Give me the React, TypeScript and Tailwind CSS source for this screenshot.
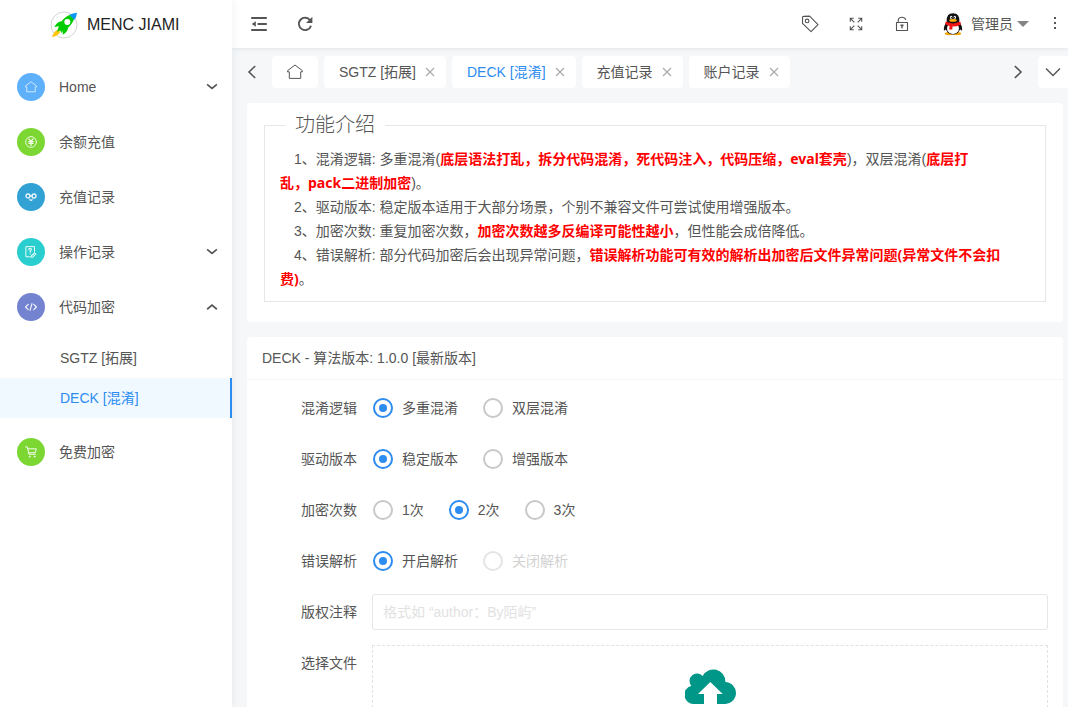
import React, { useState } from "react";

type IconProps = { className?: string };

const stroke = {
  fill: "none",
  stroke: "currentColor",
  strokeLinecap: "round" as const,
  strokeLinejoin: "round" as const,
};

function LogoIcon() {
  return (
    <svg viewBox="0 0 84 84" className="size-7" aria-hidden="true">
      <circle cx="42" cy="42" r="39" fill="#fff" stroke="#d4d4d4" strokeWidth="3" />
      <path d="M30 54 L22 56 Q10 62 6 79 Q20 76 29 67 Z" fill="#fdc50b" />
      <path
        d="M60 11 Q44 17 35 31 Q22 32 13 48 L27 46 Q22 56 22 63 L30 58 L35 66 Q39 62 39 57 L38 71 Q54 62 54 50 Q67 40 73 22 Z"
        fill="#0c0"
      />
      <path d="M58 11 Q68 6 81 5 Q80 17 73 27 Z" fill="#0a96f5" />
      <circle cx="52" cy="33" r="9" fill="#fff" />
    </svg>
  );
}

function HomeIcon({ className }: IconProps) {
  return (
    <svg viewBox="0 0 16 16" className={className} {...stroke} aria-hidden="true">
      <path d="M0.7 6.6 8 1l7.3 5.6v1.2h-1.6v6.6H2.3V7.8H0.7z" />
    </svg>
  );
}

function YenIcon() {
  return (
    <svg viewBox="0 0 12 12" className="size-3" {...stroke} aria-hidden="true">
      <circle cx="6" cy="6" r="5.4" strokeWidth="0.9" />
      <path d="M3.9 2.9 6 5.4l2.1-2.5M6 5.4v4M3.8 5.6h4.4M3.8 7.3h4.4" strokeWidth="1.2" />
    </svg>
  );
}

function GlassesIcon() {
  return (
    <svg viewBox="0 0 12 12" className="size-3" {...stroke} aria-hidden="true">
      <circle cx="3" cy="5" r="2" strokeWidth="1.3" />
      <circle cx="9" cy="5" r="2" strokeWidth="1.3" />
      <path d="M5 4.6q1 .9 2 0" strokeWidth="1.1" />
      <path d="M4.9 8.8q1.1 1 2.2 0" strokeWidth="1.3" />
    </svg>
  );
}

function SurveyIcon() {
  return (
    <svg viewBox="0 0 12 12" className="size-3" {...stroke} aria-hidden="true">
      <path d="M5 10.8H.9V.6h8.6v4.8" />
      <path d="M3.8 3.7q0-1.3 1.3-1.3t1.3 1.2q0 .8-1.2 1.5v1.1M5.2 7.9v.1" strokeWidth="1.1" />
      <path d="M6.3 9.7 9.5 6.6l1.6 1.5-3.2 3.1H6.3zM7.6 9.7l2.2-2.2" />
    </svg>
  );
}

function CodeIcon() {
  return (
    <svg viewBox="0 0 12 12" className="size-3" {...stroke} strokeWidth="1.2" aria-hidden="true">
      <path d="M3.2 3.4.6 6l2.6 2.6M8.8 3.4 11.4 6 8.8 8.6M7 2.7 5 9.3" />
    </svg>
  );
}

function CartIcon() {
  return (
    <svg viewBox="0 0 12 12" className="size-3" {...stroke} aria-hidden="true">
      <path d="M.6.9h1.7L4 8.3h6.6M2.9 2.8h8.4l-.9 3.7-6.8.4" />
      <path d="M4.7 10.6h.1M9.6 10.6h.1" strokeWidth="1.9" />
    </svg>
  );
}

function Chevron({ className, d, width = 1.6 }: IconProps & { d: string; width?: number }) {
  return (
    <svg viewBox="0 0 16 16" className={className} fill="none" stroke="currentColor" strokeWidth={width} aria-hidden="true">
      <path d={d} />
    </svg>
  );
}

function FoldIcon() {
  return (
    <svg viewBox="0 0 16 16" className="size-4" aria-hidden="true" fill="none" stroke="currentColor" strokeWidth="2">
      <path d="M.2 2h15.6M6.6 8h9.2M.2 14h15.6" />
      <path d="M4.8 5.2v5.6L.8 8z" fill="currentColor" stroke="none" />
    </svg>
  );
}

function RefreshIcon() {
  return (
    <svg viewBox="0 0 16 16" className="size-4" aria-hidden="true" fill="none" stroke="currentColor" strokeWidth="1.9">
      <path d="M13.1 4.2A6.2 6.2 0 1 0 14 9.8" />
      <path d="M15.4 .8v6.2H9z" fill="currentColor" stroke="none" />
    </svg>
  );
}

function TagIcon() {
  return (
    <svg viewBox="0 0 18 18" className="size-[18px]" {...stroke} strokeWidth="1.1" aria-hidden="true">
      <path d="M1.6 2.3Q1.6 1.4 2.5 1.4L8.6 1.1 17 9.7 10 16.6 1.5 8.4z" />
      <circle cx="6.1" cy="5.9" r="1.8" />
    </svg>
  );
}

function ExpandIcon() {
  return (
    <svg viewBox="0 0 14 14" className="size-3.5" fill="none" stroke="currentColor" strokeWidth="1.1" aria-hidden="true">
      <path d="M1.3 4.8V1.3H4.8M1.3 1.3l4 4M9.2 1.3h3.5V4.8M12.7 1.3l-4 4M1.3 9.2v3.5H4.8M1.3 12.7l4-4M12.7 9.2v3.5H9.2M12.7 12.7l-4-4" />
    </svg>
  );
}

function LockIcon() {
  return (
    <svg viewBox="0 0 14 16" className="h-4 w-3.5" {...stroke} strokeWidth="1.1" aria-hidden="true">
      <path d="M1.5 6.5h11v8h-11zM3.2 6.5V4.4Q3.4 1.2 7 1.2q2.8 0 3.7 2.4" />
      <path d="M6 9.3h2M7 9.3v2.4" strokeWidth="1.5" />
    </svg>
  );
}

function PenguinIcon() {
  return (
    <svg viewBox="0 0 20 24" className="h-6 w-5" aria-hidden="true">
      <ellipse cx="6" cy="21.6" rx="4.2" ry="1.6" fill="#f5a800" />
      <ellipse cx="14" cy="21.6" rx="4.2" ry="1.6" fill="#f5a800" />
      <path d="M4 10Q.2 14 .9 18.4q1 .6 2.5-1.6l13.2 0q1.5 2.2 2.5 1.6Q19.8 14 16 10z" fill="#111" />
      <ellipse cx="10" cy="15.6" rx="7.4" ry="6.8" fill="#111" />
      <ellipse cx="10" cy="16.4" rx="6" ry="5.6" fill="#fff" />
      <path d="M3.6 9.6Q3.2 1.2 10 1.2t6.4 8.4q-3 2.8-6.4 2.8T3.6 9.6z" fill="#111" />
      <ellipse cx="8.2" cy="5.4" rx="1.2" ry="1.7" fill="#fff" />
      <ellipse cx="11.8" cy="5.4" rx="1.2" ry="1.7" fill="#fff" />
      <circle cx="8.6" cy="5.7" r=".7" fill="#111" />
      <circle cx="11.4" cy="5.7" r=".7" fill="#111" />
      <ellipse cx="10" cy="8.4" rx="3.8" ry="1.3" fill="#ffb000" />
      <path d="M2.8 9.6q7.2 3.6 14.4 0l.9 2.8q-4 2.2-8.6 2.2l-.2 2.8H6.2l.4-3.3q-2.6-.6-4.5-2z" fill="#f01414" />
    </svg>
  );
}

function CloudUploadIcon() {
  return (
    <svg viewBox="0 0 153 105" className="h-[35px] w-[51px] text-[#009688]" fill="currentColor" aria-hidden="true">
      <path d="M28 105A28 28 0 0 1 19 50A21 21 0 0 1 53 21A36 36 0 0 1 121 39A33 33 0 0 1 119 105H96V75H113L76 39L39 75H57V105Z" />
    </svg>
  );
}

const DOWN = "M1.5 4.5 8 10 14.5 4.5";
const UP = "M1.5 11 8 5.5 14.5 11";
const LEFT = "M11.2 2 5 8l6.2 6";
const RIGHT = "M4.8 2 11 8l-6.2 6";

function MenuItem({ label, color, icon, arrow }: { label: string; color: string; icon: React.ReactNode; arrow?: string }) {
  return (
    <a href="#" className="flex h-10 items-center pr-[14px] pl-[17px] hover:text-[#2d8cf0]">
      <span className={`mr-3.5 flex size-7 items-center justify-center rounded-full text-white/90 ${color}`}>{icon}</span>
      <span className="flex-1">{label}</span>
      {arrow && <Chevron className="size-3" d={arrow} width={2.2} />}
    </a>
  );
}

function Sidebar() {
  return (
    <aside className="z-10 flex w-[232px] shrink-0 flex-col bg-white shadow-[2px_0_8px_rgba(29,35,41,0.05)]">
      <div className="flex h-[49px] items-center gap-[9px] pl-[50px] text-base text-[#222]">
        <LogoIcon />
        <span>MENC JIAMI</span>
      </div>
      <nav className="mt-[18px] flex flex-col gap-[15px]">
        <MenuItem label="Home" color="bg-[#5fb0fb]" icon={<HomeIcon className="size-3" />} arrow={DOWN} />
        <MenuItem label="余额充值" color="bg-[#7cd733]" icon={<YenIcon />} />
        <MenuItem label="充值记录" color="bg-[#32a2d4]" icon={<GlassesIcon />} />
        <MenuItem label="操作记录" color="bg-[#2bcecf]" icon={<SurveyIcon />} arrow={DOWN} />
        <div>
          <MenuItem label="代码加密" color="bg-[#7383cf]" icon={<CodeIcon />} arrow={UP} />
          <div className="mt-[11px] -mb-px">
            <a href="#" className="flex h-10 items-center pl-[60px]">SGTZ [拓展]</a>
            <a href="#" aria-current="page" className="flex h-10 items-center border-r-2 border-[#2d8cf0] bg-[#f0f9ff] pl-[60px] text-[#2d8cf0]">
              DECK [混淆]
            </a>
          </div>
        </div>
        <MenuItem label="免费加密" color="bg-[#7cd733]" icon={<CartIcon />} />
      </nav>
    </aside>
  );
}

function Header() {
  return (
    <header className="z-[5] flex h-12 shrink-0 items-center bg-white pr-[9px] pl-[19px] shadow-[0_1px_4px_rgba(0,21,41,0.08)]">
      <button aria-label="折叠菜单"><FoldIcon /></button>
      <button aria-label="刷新" className="ml-[30px]"><RefreshIcon /></button>
      <div className="ml-auto flex items-center">
        <button aria-label="标签"><TagIcon /></button>
        <button aria-label="全屏" className="ml-[30px]"><ExpandIcon /></button>
        <button aria-label="锁屏" className="ml-8"><LockIcon /></button>
        <button className="ml-[34px] flex items-center">
          <PenguinIcon />
          <span className="ml-2">管理员</span>
          <svg viewBox="0 0 12 6" className="ml-1 h-1.5 w-3 text-[#848484]" aria-hidden="true">
            <path d="M0 0h12L6 6z" fill="currentColor" />
          </svg>
        </button>
        <button aria-label="更多" className="ml-[22px]">
          <svg viewBox="0 0 8 16" className="h-4 w-2" fill="currentColor" aria-hidden="true">
            <path d="M3 1h2v2H3zM3 6h2v2H3zM3 11h2v2H3z" />
          </svg>
        </button>
      </div>
    </header>
  );
}

function Tab({ label, active }: { label: string; active?: boolean }) {
  return (
    <div className="flex h-8 shrink-0 items-center rounded bg-white pr-[11px] pl-[15px]">
      <a href="#" className={active ? "text-[#2d8cf0]" : ""}>{label}</a>
      <button aria-label={`关闭 ${label}`} className="ml-[9px] text-[#a8a8a8]">
        <svg viewBox="0 0 10 10" className="size-2.5" fill="none" stroke="currentColor" strokeWidth="1.1" aria-hidden="true">
          <path d="M1 1l8 8M9 1l-8 8" />
        </svg>
      </button>
    </div>
  );
}

function TabBar() {
  return (
    <div className="flex h-[47px] shrink-0 items-start pt-2">
      <button aria-label="向左" className="flex h-8 w-10 items-center justify-center">
        <Chevron className="size-4" d={LEFT} />
      </button>
      <div className="flex flex-1 gap-1.5">
        <a href="#" aria-label="首页" className="flex h-8 w-[46px] items-center justify-center rounded bg-white">
          <HomeIcon className="size-4" />
        </a>
        <Tab label="SGTZ [拓展]" />
        <Tab label="DECK [混淆]" active />
        <Tab label="充值记录" />
        <Tab label="账户记录" />
      </div>
      <button aria-label="向右" className="flex h-8 w-10 items-center justify-center">
        <Chevron className="size-4" d={RIGHT} />
      </button>
      <button aria-label="标签操作" className="flex h-8 w-[30px] items-center justify-center rounded-l bg-white">
        <Chevron className="size-4" d="M1 4.5 8 11.5 15 4.5" width={1.4} />
      </button>
    </div>
  );
}

function Em({ children }: { children: React.ReactNode }) {
  return <strong className="font-['Noto_Sans','Noto_Sans_CJK_SC',sans-serif] font-bold text-[#f00]">{children}</strong>;
}

function Intro() {
  return (
    <section className="rounded bg-white px-[17px] pt-2.5 pb-5">
      <fieldset className="border border-[#e6e6e6] px-[15px] pb-2.5 leading-6">
        <legend className="ml-[5px] px-2.5 text-xl leading-6 font-light">功能介绍</legend>
        <div className="pt-2.5">
          <p className="indent-[14px]">
            1、混淆逻辑: 多重混淆(<Em>底层语法打乱，拆分代码混淆，死代码注入，代码压缩，eval套壳</Em>)，双层混淆(<Em>底层打<br />乱，pack二进制加密</Em>)。
          </p>
          <p className="indent-[14px]">2、驱动版本: 稳定版本适用于大部分场景，个别不兼容文件可尝试使用增强版本。</p>
          <p className="indent-[14px]">3、加密次数: 重复加密次数，<Em>加密次数越多反编译可能性越小</Em>，但性能会成倍降低。</p>
          <p className="indent-[14px]">4、错误解析: 部分代码加密后会出现异常问题，<Em>错误解析功能可有效的解析出加密后文件异常问题(异常文件不会扣<wbr />费)</Em>。</p>
        </div>
      </fieldset>
    </section>
  );
}

type Choice = { text: string; disabled?: boolean };

function RadioRow({ label, name, options, initial }: { label: string; name: string; options: Choice[]; initial: number }) {
  const [value, setValue] = useState(initial);
  return (
    <div role="radiogroup" aria-label={label} className="flex h-9 items-center">
      <span className="w-[110px] shrink-0 pr-[15px] text-right">{label}</span>
      <div className="flex gap-[25px] pl-px">
        {options.map((o, i) => (
          <label key={o.text} className={`flex items-center gap-[9px] ${o.disabled ? "text-[#d2d2d2]" : ""}`}>
            <input
              type="radio"
              name={name}
              checked={value === i}
              disabled={o.disabled}
              onChange={() => setValue(i)}
              className="grid size-5 appearance-none place-content-center rounded-full border-2 border-[#c8c8c8] before:size-2 before:rounded-full checked:border-[#2d8cf0] checked:before:bg-[#2d8cf0] disabled:border-[#e4e4e4]"
            />
            {o.text}
          </label>
        ))}
      </div>
    </div>
  );
}

function DeckForm() {
  return (
    <section className="rounded bg-white">
      <h2 className="flex h-[43px] items-center border-b border-[#f6f6f6] px-[15px]">DECK - 算法版本: 1.0.0 [最新版本]</h2>
      <form className="flex flex-col gap-[15px] px-[15px] py-2.5">
        <RadioRow label="混淆逻辑" name="logic" initial={0} options={[{ text: "多重混淆" }, { text: "双层混淆" }]} />
        <RadioRow label="驱动版本" name="driver" initial={0} options={[{ text: "稳定版本" }, { text: "增强版本" }]} />
        <RadioRow label="加密次数" name="times" initial={1} options={[{ text: "1次" }, { text: "2次" }, { text: "3次" }]} />
        <RadioRow label="错误解析" name="parse" initial={0} options={[{ text: "开启解析" }, { text: "关闭解析", disabled: true }]} />
        <div className="flex h-9 items-center">
          <label htmlFor="note" className="w-[110px] shrink-0 pr-[15px] text-right">版权注释</label>
          <input
            id="note"
            type="text"
            placeholder="格式如 “author：By陌屿”"
            className="h-9 min-w-0 flex-1 rounded-[3px] border border-[#e6e6e6] px-2.5 outline-none placeholder:text-[#e2e2e2] focus:border-[#d2d2d2]"
          />
        </div>
        <div className="flex items-start">
          <span id="file-label" className="flex h-9 w-[110px] shrink-0 items-center justify-end pr-[15px]">选择文件</span>
          <button type="button" aria-labelledby="file-label" className="flex h-32 flex-1 justify-center border border-dashed border-[#e2e2e2] pt-[23px]">
            <CloudUploadIcon />
          </button>
        </div>
      </form>
    </section>
  );
}

export default function App() {
  return (
    <div className="flex h-screen overflow-hidden bg-[#f5f7f9] font-['Liberation_Sans','Noto_Sans_CJK_SC',sans-serif] text-sm text-[#555]">
      <Sidebar />
      <div className="flex min-w-0 flex-1 flex-col">
        <Header />
        <TabBar />
        <main className="min-h-0 flex-1 overflow-hidden">
          <div className="flex flex-col gap-[15px] pt-2 pr-[5px] pl-[15px]">
            <Intro />
            <DeckForm />
          </div>
        </main>
      </div>
    </div>
  );
}
